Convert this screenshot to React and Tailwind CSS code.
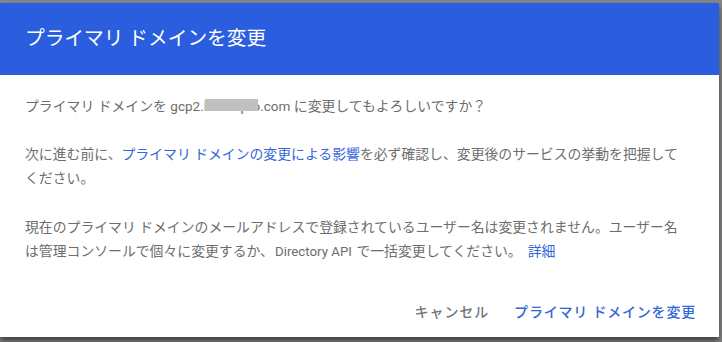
const bodyFont = { fontFamily: 'Roboto, "Noto Sans CJK JP", sans-serif' };

export default function App() {
    return (
        <div
            className="h-[342px] w-[722px] overflow-hidden bg-[#868686] pt-[3px]"
            style={bodyFont}
        >
            <div className="flex h-[334px] w-[719px] flex-col bg-white shadow-[0_4px_6px_rgba(0,0,0,0.55)]">
                <header className="flex h-[72px] shrink-0 items-center bg-[#2a5edf] px-[25px]">
                    <h2 className="text-[19.7px] font-normal leading-none text-white">
                        プライマリ ドメインを変更
                    </h2>
                </header>

                <div className="px-[25px] pt-[19px] text-[13.85px] leading-[24px] text-[#6d6d6d]">
                    <p className="mb-6">
                        プライマリ ドメインを{' '}
                        <span className="relative text-[13.5px]">
                            gcp2.lxxxxxpro.com
                            <span className="absolute left-[35px] top-[1px] h-[12px] w-[53px] bg-[#c0c0c0]" />
                        </span>{' '}
                        に変更してもよろしいですか？
                    </p>
                    <p className="mb-[25px]">
                        次に進む前に、
                        <a href="#" className="text-[#2f66d8]">
                            プライマリ ドメインの変更による影響
                        </a>
                        を必ず確認し、変更後のサービスの挙動を把握して
                        <br />
                        ください。
                    </p>
                    <p>
                        現在のプライマリ ドメインのメールアドレスで登録されているユーザー名は変更されません。ユーザー名
                        <br />
                        は管理コンソールで個々に変更するか、
                        <span className="px-[1px] text-[13.3px]">Directory API</span> で一括変更してください。
                        <a href="#" className="ml-[6px] text-[#2f66d8]">
                            詳細
                        </a>
                    </p>
                </div>

                <div className="mt-auto flex justify-end gap-[10px] pb-[7px] pr-4">
                    <button
                        type="button"
                        className="h-9 pl-2 pr-[7px] text-[14px] font-medium tracking-[0.9px] text-[#757575]"
                    >
                        キャンセル
                    </button>
                    <button
                        type="button"
                        className="h-9 pl-2 pr-[7px] text-[14px] font-medium tracking-[0.8px] text-[#3367d6]"
                    >
                        プライマリ ドメインを変更
                    </button>
                </div>
            </div>
        </div>
    );
}
